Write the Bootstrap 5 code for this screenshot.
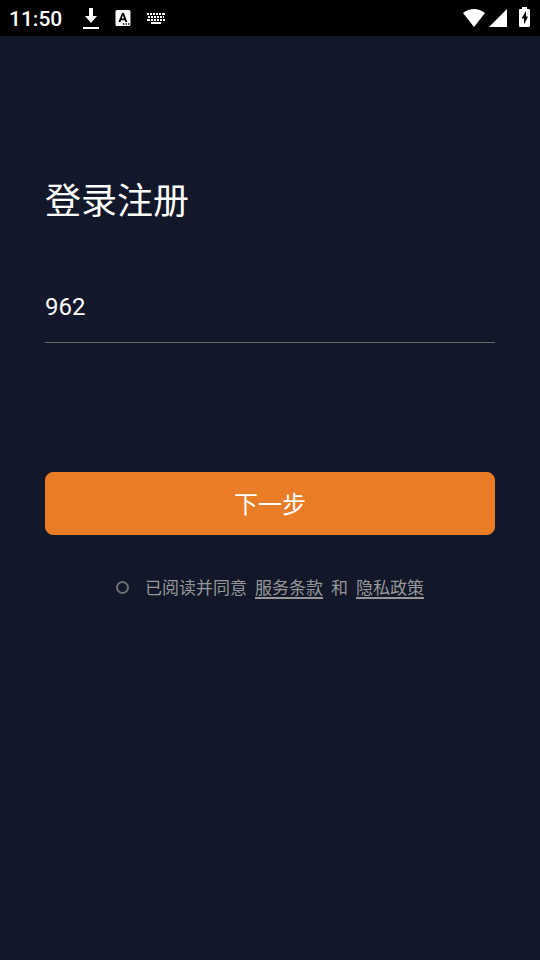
<!DOCTYPE html>
<html lang="zh-CN">
<head>
<meta charset="utf-8">
<meta name="viewport" content="width=device-width, initial-scale=1">
<title>登录注册</title>
<link href="https://cdn.jsdelivr.net/npm/bootstrap@5.3.0/dist/css/bootstrap.min.css" rel="stylesheet">
<style>
  body { background: #121729; color: #fff; font-family: Roboto, "Noto Sans CJK SC", sans-serif; }
  .status-bar { background: #000; height: 36px; padding: 0 9px; }
  .status-bar svg { display: block; fill: #fff; }
  .clock { font-size: 21px; line-height: 34px; padding-top: 2px; font-weight: 500; }
  .notices { gap: 14px; margin-left: 20px; }
  .signals { gap: 3px; }
  .login { padding: 139px 45px 45px; }
  .title { font-size: 36px; line-height: 54px; font-weight: 400; margin-bottom: 41px; }
  .phone, .phone:focus { font-size: 24px; line-height: 36px; height: 73px; padding: 2px 0 0; color: #fff; background: transparent; border: 0; border-bottom: 1px solid #68686c; border-radius: 0; box-shadow: none; }
  .next { --bs-btn-color: #fff; --bs-btn-bg: #e97c27; --bs-btn-border-color: #e97c27; --bs-btn-hover-color: #fff; --bs-btn-hover-bg: #d96f1d; --bs-btn-hover-border-color: #d96f1d; --bs-btn-border-radius: 8px; font-size: 24px; line-height: 36px; height: 63px; padding: 8px 0 6px; margin-top: 129px; }
  .agree { color: #97979a; font-size: 17px; line-height: 26px; margin-top: 40px; gap: 8px; }
  .agree a { color: inherit; line-height: 26px; text-decoration: underline 2px; text-underline-offset: 3px; }
  .agree .form-check-input { width: 13px; height: 13px; margin: 0 8px 2px 0; background-color: transparent; border: 2px solid #6f7075; border-radius: 50%; }
  .agree .form-check-input:checked { background-color: #e97c27; }
</style>
<script src="https://cdn.jsdelivr.net/npm/bootstrap@5.3.0/dist/js/bootstrap.bundle.min.js" defer></script>
</head>
<body>
<header class="status-bar d-flex align-items-center">
  <span class="clock">11:50</span>
  <div class="notices d-flex align-items-center">
    <svg width="18" height="22" viewBox="0 0 18 22" aria-hidden="true"><path d="M7 1h4v8h4l-6 7-6-7h4zM1 20h16v2H1z"/></svg>
    <svg width="18" height="18" viewBox="0 0 18 18" aria-hidden="true"><path fill-rule="evenodd" d="M3 1h12q1.500 0 1.500 1.500v13q0 1.500-1.500 1.500H3q-1.500 0-1.500-1.500v-13Q1.500 1 3 1zM8 4 4.500 13h2l.6-1.800h3.600l.6 1.800h2L9.900 4zM8.900 6.300l1.200 3.300H7.700zM9 14.300v1.400h1.400v-1.400zm2.500 0v1.400h1.400v-1.400zm2.500 0v1.400h1.400v-1.400z"/></svg>
    <svg width="20" height="14" viewBox="0 0 20 14" aria-hidden="true"><path d="M1 2h2v2H1zm3 0h2v2H4zm3 0h2v2H7zm3 0h2v2h-2zm3 0h2v2h-2zm3 0h3v2h-3zM2 5h2v2H2zm3 0h2v2H5zm3 0h2v2H8zm3 0h2v2h-2zm3 0h2v2h-2zm3 0h1v2h-1zM1 8h3v2H1zm4 0h2v2H5zm3 0h2v2H8zm3 0h2v2h-2zm3 0h2v2h-2zm3 0h2v2h-2zM5 11h10v2H5z"/></svg>
  </div>
  <div class="signals d-flex align-items-center ms-auto">
    <svg width="24" height="20" viewBox="0 0 24 20" aria-hidden="true"><path d="M1 5Q12-3 23 5L12 19z"/></svg>
    <svg width="18" height="20" viewBox="0 0 18 20" aria-hidden="true"><path d="M18 1v18H0z"/></svg>
    <svg class="ms-2" width="13" height="22" viewBox="0 0 13 22" aria-hidden="true"><path fill-rule="evenodd" d="M4 0h5v2h2q1 0 1 1v16q0 1-1 1H2q-1 0-1-1V3q0-1 1-1h2zM8 4 3.500 11.500H6V17.500l4-8H8z"/></svg>
  </div>
</header>
<main class="login">
  <h1 class="title">登录注册</h1>
  <form>
    <input class="form-control phone" type="tel" value="962" aria-label="手机号">
    <button class="btn next w-100" type="button">下一步</button>
    <div class="agree d-flex justify-content-center align-items-center">
      <input class="form-check-input flex-shrink-0" type="checkbox" id="agree">
      <label for="agree">已阅读并同意</label>
      <a href="#terms">服务条款</a>
      <span>和</span>
      <a href="#privacy">隐私政策</a>
    </div>
  </form>
</main>
</body>
</html>
